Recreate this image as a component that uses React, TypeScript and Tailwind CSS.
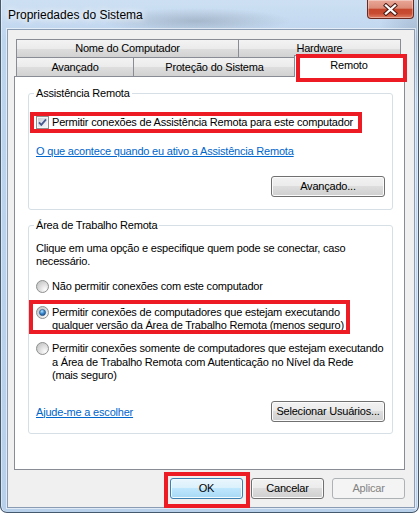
import React from "react";

const font = "font-['Liberation_Sans',Arial,sans-serif]";

const btnBase = "flex h-[21px] items-center justify-center rounded-[3px] border leading-[13px]";
const btnNormal =
  "border-[#707070] bg-[linear-gradient(#f2f2f2_0%,#ebebeb_50%,#dddddd_50%,#cfcfcf_100%)] shadow-[inset_0_0_0_1px_#fbfbfb]";
const btnDefault =
  "border-[#3c7fb1] bg-[linear-gradient(#eaf6fd_0%,#d9f0fc_50%,#bee6fd_50%,#a7d9f5_100%)] shadow-[inset_0_0_0_1px_#f4fbff]";
const btnDisabled = "border-[#adb2b5] bg-[#f4f4f4] text-[#838383]";

const tabBg = "bg-[linear-gradient(#f3f3f3_0%,#ebebeb_50%,#dedede_50%,#d2d2d2_100%)]";

// red annotation frame drawn over the screenshot
function Mark({ className }: { className: string }) {
  return <span className={`pointer-events-none absolute z-20 border-4 border-[#ed1c24] ${className}`} />;
}

function CheckBox() {
  return (
    <svg width="13" height="13" viewBox="0 0 13 13" className="shrink-0">
      <defs>
        <linearGradient id="cb" x1="0" y1="0" x2="1" y2="1">
          <stop offset="0" stopColor="#cbd1da" />
          <stop offset="1" stopColor="#f6f7f9" />
        </linearGradient>
      </defs>
      <rect x="0.5" y="0.5" width="12" height="12" fill="#f5f5f5" stroke="#8e8f8f" />
      <rect x="2" y="2" width="9" height="9" fill="url(#cb)" />
      <path d="M3 6.4 5.3 8.9 10 3.4" fill="none" stroke="#46598f" strokeWidth="1.8" />
    </svg>
  );
}

function Radio({ on }: { on?: boolean }) {
  return (
    <svg width="13" height="13" viewBox="0 0 13 13" className="shrink-0">
      <defs>
        <radialGradient id="rg" cx="0.72" cy="0.75" r="0.85">
          <stop offset="0" stopColor="#fcfcfc" />
          <stop offset="1" stopColor="#c4c4c4" />
        </radialGradient>
        <radialGradient id="rd" cx="0.4" cy="0.3" r="0.75">
          <stop offset="0" stopColor="#b5e3fb" />
          <stop offset="0.5" stopColor="#3d8cd2" />
          <stop offset="1" stopColor="#164a84" />
        </radialGradient>
      </defs>
      <circle cx="6.5" cy="6.5" r="6" fill="url(#rg)" stroke="#8e8f8f" />
      {on && <circle cx="6.5" cy="6.5" r="3.1" fill="url(#rd)" stroke="#1c4a7e" strokeWidth="0.6" />}
    </svg>
  );
}

function CloseButton() {
  return (
    <div className="flex h-[19px] w-[47px] items-center justify-center rounded-b-[4px] border border-t-0 border-[#6a2920] bg-[linear-gradient(#e9a797_0%,#dc8c79_45%,#c5472d_52%,#c84c31_75%,#df7f64_100%)] shadow-[inset_0_0_0_1px_rgba(255,255,255,0.35)]">
      <svg width="15" height="13" viewBox="0 0 15 13">
        <path d="M3 2.5 12 10.5M12 2.5 3 10.5" stroke="#4a1a14" strokeWidth="4.2" strokeLinecap="square" />
        <path d="M3 2.5 12 10.5M12 2.5 3 10.5" stroke="#ffffff" strokeWidth="2.3" strokeLinecap="square" />
      </svg>
    </div>
  );
}

export default function App() {
  return (
    <div className={`h-[515px] w-[420px] bg-white text-[11px] tracking-[-0.2px] text-black ${font}`}>
      <div className="flex h-[513px] w-[419px] flex-col rounded-b-[7px] border-x border-b border-[#44586e] bg-[radial-gradient(95px_13px_at_195px_21px,rgba(95,105,120,0.3),transparent),radial-gradient(40px_60px_at_418px_40px,rgba(110,130,155,0.35),transparent),linear-gradient(180deg,#cde0f3_0%,#bed5ee_40px,#b8d0ea_100%)] shadow-[inset_1px_0_0_rgba(255,255,255,0.45),inset_-1px_0_0_rgba(255,255,255,0.45)]">
        {/* Title bar */}
        <div className="flex h-[29px] shrink-0 items-start justify-between pl-[7px] pr-[4px]">
          <span className="mt-[7px] text-[12px] leading-[16px] tracking-normal [text-shadow:0_0_6px_#fff,0_0_10px_#fff]">
            Propriedades do Sistema
          </span>
          <CloseButton />
        </div>

        {/* Client area */}
        <div className="mb-[4px] ml-[6px] mr-[3px] flex-1 border border-[#8a9cb3] bg-[#f0f0f0] pl-[6px] pt-[9px] shadow-[0_0_0_1px_rgba(255,255,255,0.55)]">
          {/* Tabs */}
          <div className="ml-[2px] flex h-[18px]">
            <div className={`flex w-[223px] items-center justify-center border-x border-t border-[#898c95] ${tabBg}`}>
              Nome do Computador
            </div>
            <div className={`flex w-[162px] items-center justify-center border-r border-t border-[#898c95] ${tabBg}`}>
              Hardware
            </div>
          </div>
          <div className="ml-[2px] flex h-[19px] items-end">
            <div className={`flex h-[19px] w-[118px] items-center justify-center border-x border-t border-[#898c95] ${tabBg}`}>
              Avançado
            </div>
            <div className={`flex h-[19px] w-[162px] items-center justify-center border-r border-t border-[#898c95] ${tabBg}`}>
              Proteção do Sistema
            </div>
            <div className="relative z-10 -mb-[1px] -ml-[2px] flex h-[22px] w-[110px] justify-center border-x border-t border-[#898c95] bg-white pt-[2px] leading-[15px]">
              Remoto
              <Mark className="-top-[2px] left-[1px] h-[28px] w-[111px]" />
            </div>
          </div>

          {/* Tab page */}
          <div className="h-[394px] w-[391px] border border-[#898c95] bg-white pl-[13px] pt-[9px]">
            <fieldset className="w-[365px] rounded-[3px] border border-[#d5dfe5] px-[7px] pb-[12px]">
              <legend className="-ml-[2px] px-[2px] leading-[15px]">Assistência Remota</legend>
              <div className="relative mt-[15px] flex items-start gap-[3px] leading-[13px]">
                <CheckBox />
                <span className="whitespace-nowrap">Permitir conexões de Assistência Remota para este computador</span>
                <Mark className="-left-[6px] -top-[4px] h-[21px] w-[332px]" />
              </div>
              <a className="mt-[16px] block w-fit leading-[13px] text-[#0066cc] underline">
                O que acontece quando eu ativo a Assistência Remota
              </a>
              <div className="mt-[18px] flex justify-end">
                <button className={`${btnBase} ${btnNormal} w-[114px]`}>Avançado...</button>
              </div>
            </fieldset>

            <fieldset className="mt-[8px] w-[365px] rounded-[3px] border border-[#d5dfe5] px-[7px] pb-[11px]">
              <legend className="-ml-[2px] px-[2px] leading-[15px]">Área de Trabalho Remota</legend>
              <p className="mt-[9px] whitespace-nowrap leading-[13px]">
                Clique em uma opção e especifique quem pode se conectar, caso
                <br />
                necessário.
              </p>
              <div className="mt-[12px] flex items-start gap-[3px] leading-[13px]">
                <Radio />
                <span className="whitespace-nowrap">Não permitir conexões com este computador</span>
              </div>
              <div className="relative mt-[13px] flex items-start gap-[3px] leading-[13px]">
                <Radio on />
                <span className="whitespace-nowrap">
                  Permitir conexões de computadores que estejam executando
                  <br />
                  qualquer versão da Área de Trabalho Remota (menos seguro)
                </span>
                <Mark className="-left-[7px] -top-[6px] h-[34px] w-[321px]" />
              </div>
              <div className="mt-[10px] flex items-start gap-[3px] leading-[13.5px]">
                <Radio />
                <span className="whitespace-nowrap">
                  Permitir conexões somente de computadores que estejam executando
                  <br />
                  a Área de Trabalho Remota com Autenticação no Nível da Rede
                  <br />
                  (mais seguro)
                </span>
              </div>
              <div className="mt-[18px] flex items-center justify-between">
                <a className="pt-[2px] leading-[13px] text-[#0066cc] underline">Ajude-me a escolher</a>
                <button className={`${btnBase} ${btnNormal} w-[114px]`}>Selecionar Usuários...</button>
              </div>
            </fieldset>
          </div>

          {/* Dialog buttons */}
          <div className="mt-[8px] flex w-[391px] justify-end gap-[8px]">
            <button className={`${btnBase} ${btnDefault} relative w-[73px]`}>
              OK
              <Mark className="-left-[7px] -top-[7px] h-[36px] w-[86px]" />
            </button>
            <button className={`${btnBase} ${btnNormal} w-[73px]`}>Cancelar</button>
            <button className={`${btnBase} ${btnDisabled} w-[73px]`}>Aplicar</button>
          </div>
        </div>
      </div>
    </div>
  );
}
